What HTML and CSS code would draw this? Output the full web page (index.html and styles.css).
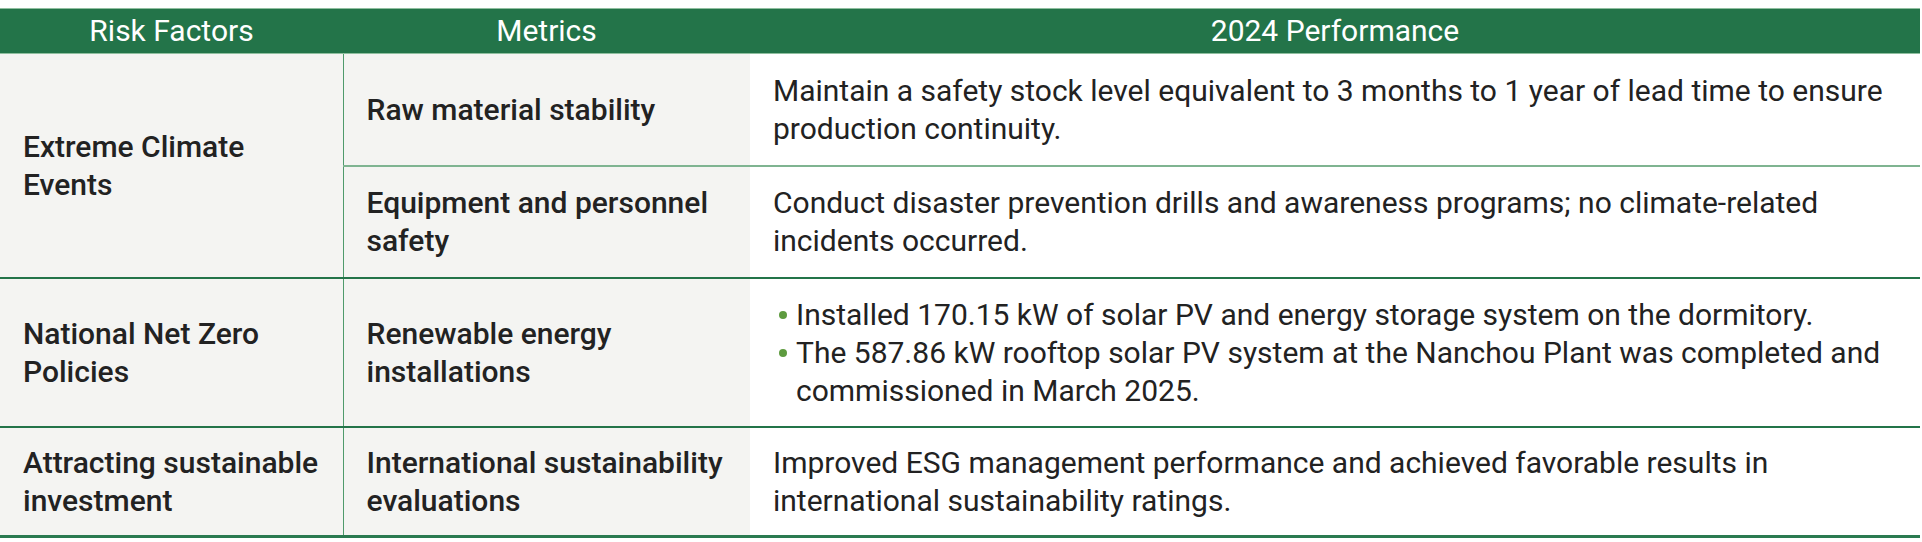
FILE: index.html
```html
<!DOCTYPE html>
<html lang="en">
<head>
<meta charset="utf-8">
<title>Climate Risk Metrics</title>
<link rel="stylesheet" href="styles.css">
</head>
<body>
<table class="risk-table">
  <colgroup>
    <col class="c-risk">
    <col class="c-metric">
    <col class="c-perf">
  </colgroup>
  <thead>
    <tr>
      <th>Risk Factors</th>
      <th>Metrics</th>
      <th>2024 Performance</th>
    </tr>
  </thead>
  <tbody>
    <tr class="row-sub">
      <td class="risk span-end" rowspan="2">Extreme Climate<br>Events</td>
      <td class="metric">Raw material stability</td>
      <td class="perf">Maintain a safety stock level equivalent to 3 months to 1 year of lead time to ensure production continuity.</td>
    </tr>
    <tr class="row-end">
      <td class="metric">Equipment and personnel safety</td>
      <td class="perf">Conduct disaster prevention drills and awareness programs; no climate-related incidents occurred.</td>
    </tr>
    <tr class="row-end row-mid">
      <td class="risk">National Net Zero<br>Policies</td>
      <td class="metric">Renewable energy<br>installations</td>
      <td class="perf">
        <ul class="bullets">
          <li>Installed 170.15 kW of solar PV and energy storage system on the dormitory.</li>
          <li>The 587.86 kW rooftop solar PV system at the Nanchou Plant was completed and commissioned in March 2025.</li>
        </ul>
      </td>
    </tr>
    <tr class="row-last">
      <td class="risk">Attracting sustainable investment</td>
      <td class="metric">International sustainability evaluations</td>
      <td class="perf">Improved ESG management performance and achieved favorable results in international sustainability ratings.</td>
    </tr>
  </tbody>
</table>
</body>
</html>
```

FILE: styles.css
```css
html, body {
  margin: 0;
  padding: 0;
  background: #ffffff;
}

body {
  padding-top: 8px;
  font-family: Roboto, "Liberation Sans", sans-serif;
  color: #222222;
}

.risk-table {
  width: 1920px;
  border-collapse: collapse;
  table-layout: fixed;
  font-size: 30px;
  line-height: 38px;
}

.c-risk { width: 343px; }
.c-metric { width: 407px; }
.c-perf { width: 1170px; }

.risk-table thead th {
  background: #237449;
  color: #ffffff;
  font-weight: 400;
  font-size: 30px;
  line-height: 32px;
  height: 44px;
  padding: 0;
  text-align: center;
  vertical-align: middle;
  border-top: 1px solid #8fbf9f;
  border-bottom: 1px solid #8fbf9f;
}

.risk-table td {
  padding: 17px 16px 17px 23px;
  vertical-align: middle;
  text-align: left;
}

.risk,
.metric {
  background: #f4f4f2;
  font-weight: 500;
  color: #222222;
}

.metric {
  border-left: 1px solid #4f9a6c;
  padding-left: 22px;
}

.perf {
  background: #ffffff;
  font-weight: 400;
  color: #222222;
}

.row-sub td.metric,
.row-sub td.perf {
  border-bottom: 2px solid #7fb491;
  padding-top: 18px;
}

.row-end td,
td.span-end {
  border-bottom: 2px solid #237449;
}

.row-mid td {
  padding-bottom: 16px;
}

.row-last td {
  border-bottom: 3px solid #2a7a50;
  padding-top: 16px;
  padding-bottom: 15px;
}

.bullets {
  list-style: none;
  margin: 0;
  padding: 0;
}

.bullets li {
  position: relative;
  padding-left: 23px;
}

.bullets li::before {
  content: "";
  position: absolute;
  left: 6px;
  top: 15px;
  width: 8px;
  height: 8px;
  border-radius: 50%;
  background: #5e9b3f;
}
```
